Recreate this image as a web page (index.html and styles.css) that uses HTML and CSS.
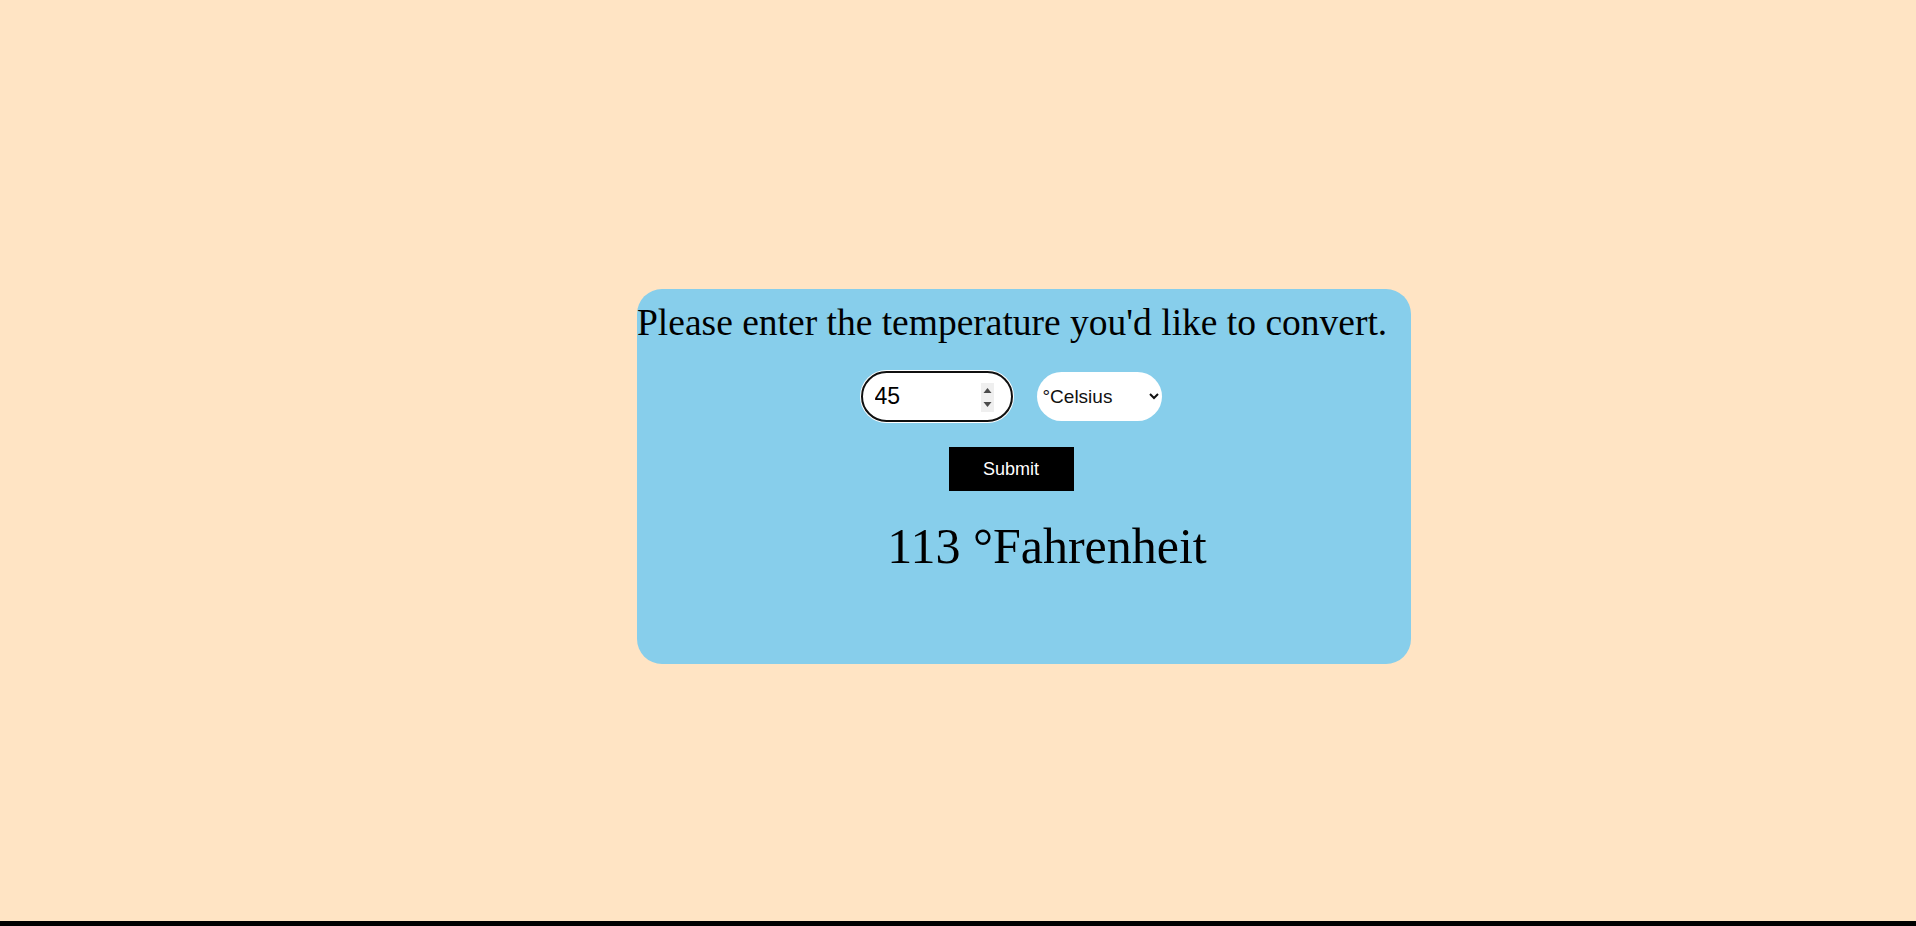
FILE: index.html
```html
<!DOCTYPE html>
<html lang="en">
<head>
<meta charset="utf-8">
<title>Temperature Converter</title>
<link rel="stylesheet" href="styles.css">
</head>
<body>
<main class="page">
  <section class="card">
    <h1 class="prompt">Please enter the temperature you'd like to convert.</h1>
    <form class="converter">
      <div class="row">
        <div class="number-field">
          <input class="number-input" type="text" value="45">
          <span class="spinner">
            <svg width="13" height="29" viewBox="0 0 13 29">
              <rect width="13" height="29" fill="#efefef"/>
              <path d="M2.5 10 L6.5 5 L10.5 10 Z" fill="#4a4a4a"/>
              <path d="M2.5 19 L6.5 24 L10.5 19 Z" fill="#4a4a4a"/>
            </svg>
          </span>
        </div>
        <select class="unit">
          <option>°Celsius</option>
          <option>°Fahrenheit</option>
        </select>
      </div>
      <button class="submit" type="button">Submit</button>
    </form>
    <p class="result">113 °Fahrenheit</p>
  </section>
</main>
<footer class="bottom-bar"></footer>
</body>
</html>
```

FILE: styles.css
```css
html, body {
  margin: 0;
  padding: 0;
}

body {
  background: #ffe4c4;
  height: 100vh;
  display: flex;
  flex-direction: column;
  font-family: "Liberation Serif", "Times New Roman", serif;
}

.page {
  flex: 1;
}

.card {
  margin: 289px 0 0 637px;
  width: 774px;
  height: 375px;
  box-sizing: border-box;
  background: #87ceeb;
  border-radius: 25px;
  padding-top: 13px;
}

.prompt {
  margin: 0;
  font-weight: normal;
  font-size: 37.5px;
  line-height: 42px;
  color: #000;
  text-align: left;
  white-space: nowrap;
}

.converter {
  display: flex;
  flex-direction: column;
  align-items: center;
  padding-right: 26px;
  margin-top: 27px;
}

.row {
  display: flex;
  align-items: center;
  gap: 24px;
}

.number-field {
  width: 152px;
  height: 51px;
  box-sizing: border-box;
  border: 2px solid #101010;
  box-shadow: 0 0 0 1px #ffffff;
  border-radius: 26px;
  background: #fff;
  display: flex;
  align-items: center;
  padding: 0 17px 0 12px;
}

.number-input {
  flex: 1;
  min-width: 0;
  border: none;
  outline: none;
  background: transparent;
  padding: 0;
  font-family: "Liberation Sans", Arial, sans-serif;
  font-size: 23px;
  color: #000;
}

.spinner {
  display: flex;
  margin-top: 1px;
}

.unit {
  width: 125px;
  height: 49px;
  border: none;
  border-radius: 25px;
  background: #fff;
  padding: 0 2px;
  font-family: "Liberation Sans", Arial, sans-serif;
  font-size: 19px;
  color: #111;
}

.submit {
  margin-top: 25px;
  width: 125px;
  height: 44px;
  border: none;
  border-radius: 0;
  background: #000;
  color: #fff;
  font-family: "Liberation Sans", Arial, sans-serif;
  font-size: 18px;
  padding: 0;
}

.result {
  margin: 27px 0 0;
  padding-left: 46px;
  text-align: center;
  font-size: 50px;
  line-height: 57px;
  color: #000;
}

.bottom-bar {
  height: 5px;
  background: #000;
}
```
